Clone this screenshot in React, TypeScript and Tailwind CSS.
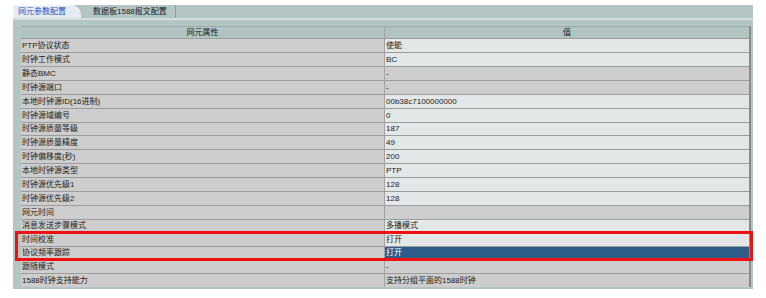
const rows: { label: string; value: string; editable: boolean; selected?: boolean; short?: boolean }[] = [
  { label: "PTP协议状态", value: "使能", editable: true },
  { label: "时钟工作模式", value: "BC", editable: true },
  { label: "静态BMC", value: "-", editable: false },
  { label: "时钟源端口", value: "-", editable: false },
  { label: "本地时钟源ID(16进制)", value: "00b38c7100000000", editable: true },
  { label: "时钟源域编号", value: "0", editable: true },
  { label: "时钟源质量等级", value: "187", editable: true, short: true },
  { label: "时钟源质量精度", value: "49", editable: true },
  { label: "时钟偏移度(秒)", value: "200", editable: true },
  { label: "本地时钟源类型", value: "PTP", editable: true },
  { label: "时钟源优先级1", value: "128", editable: true },
  { label: "时钟源优先级2", value: "128", editable: true },
  { label: "网元时间", value: "", editable: false },
  { label: "消息发送步骤模式", value: "多播模式", editable: true, short: true },
  { label: "时间校准", value: "打开", editable: true },
  { label: "协议频率跟踪", value: "打开", editable: true, selected: true, short: true },
  { label: "跟随模式", value: "-", editable: false },
  { label: "1588时钟支持能力", value: "支持分组平面的1588时钟", editable: false },
];

export default function App() {
  return (
    <div
      className="relative w-[766px] h-[298px] bg-white text-[8px] leading-none text-[#1c1c1c]"
      style={{ fontFamily: '"Liberation Sans", "Noto Sans CJK SC", sans-serif' }}
    >
      <div className="ml-[13px] pt-[5px] w-[740px]">
        {/* Tabs */}
        <div className="flex h-[13px] bg-[#b3c6c4] items-stretch">
          <div className="flex items-center w-[68px] pl-[4px] bg-[#e4ecf2] rounded-tr-[10px] border-t border-l border-[#f4f7fa] text-[#2255cc]">
            网元参数配置
          </div>
          <div className="flex items-center w-[95px] pl-[12px] border-r border-[#8e9f9e]">
            数据板1588报文配置
          </div>
        </div>
        <div className="h-[2px] bg-[#d4dfde]" />

        {/* Panel */}
        <div className="bg-[#b3c6c4] pl-[8px] pr-[2px] pt-[6px] pb-[2px]">
          <div className="border-r-2 border-[#8a8a8a]">
            <div className="grid grid-cols-2 h-[12px] bg-[#b1c4c2] border-t border-[#9fa9a8]">
              <div className="flex items-center justify-center border-r border-[#9aa5a4]">网元属性</div>
              <div className="flex items-center justify-center">值</div>
            </div>
            {rows.map((r) => (
              <div
                key={r.label}
                className={
                  r.short
                    ? "grid grid-cols-2 h-[13px] border-t border-[#9c9c9c]"
                    : "grid grid-cols-2 h-[14px] border-t border-[#9c9c9c]"
                }
              >
                <div className="flex items-center pl-[1px] bg-[#cdcdcd] border-r border-[#a3a3a3]">{r.label}</div>
                <div
                  className={
                    r.selected
                      ? "flex items-center pl-[1px] bg-[#2e5d89] text-white"
                      : r.editable
                      ? "flex items-center pl-[1px] bg-[#e3e7e7]"
                      : "flex items-center pl-[1px] bg-[#cdcdcd]"
                  }
                >
                  {r.value}
                </div>
              </div>
            ))}
          </div>
        </div>
      </div>

      {/* Highlight annotation */}
      <div className="absolute left-[15px] top-[231px] w-[738px] h-[30px] border-[3px] border-[#ee1111]" />
    </div>
  );
}
